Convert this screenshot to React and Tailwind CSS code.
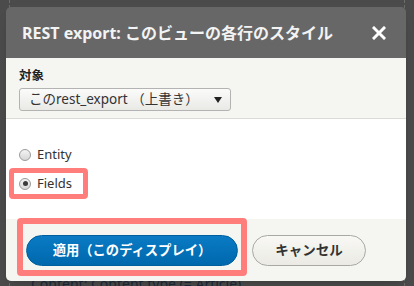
import React from "react";

const font = "font-['Noto_Sans','Noto_Sans_CJK_JP',sans-serif]";

const Radio = ({ checked }) => (
    <span className="flex h-[12px] w-[12px] items-center justify-center rounded-full border border-[#9a9a9a] bg-gradient-to-b from-[#f4f4f4] to-[#d6d6d6]">
        {checked && <span className="h-[5px] w-[5px] rounded-full bg-[#3a3a3a]" />}
    </span>
);

const App = () => {
    return (
        <div className={`h-[286px] w-[414px] overflow-hidden bg-[#4b4b4b] ${font}`}>
            <div className="mx-[9px] h-full border-x border-dashed border-[#6c6c6c] pt-[7px]">
                {/* Dialog */}
                <div className="relative z-10 -ml-[4px] w-[400px] overflow-hidden rounded-[5px] shadow-lg">
                    {/* Header */}
                    <div className="flex h-[51px] items-center justify-between bg-[#676767] pl-[16px] pr-[20px]">
                        <h1 className="text-[16px] font-bold text-[#f3f3f3]">REST export: このビューの各行のスタイル</h1>
                        <svg width="14" height="14" viewBox="0 0 14 14">
                            <path d="M2 2 L12 12 M12 2 L2 12" stroke="#ffffff" strokeWidth="3" strokeLinecap="square" />
                        </svg>
                    </div>

                    {/* Target */}
                    <div className="flex h-[61px] flex-col border-b border-[#dcdcd6] bg-[#f5f5f2] pl-[13px] pt-[8px]">
                        <label className="text-[12.5px] font-bold leading-[20px] text-[#222]">対象</label>
                        <div className="mt-[2px] flex h-[23px] w-[212px] items-center justify-between rounded-[3px] border border-[#b3b3b3] bg-gradient-to-b from-[#fbfbfa] to-[#e9e9e6] pl-[9px] pr-[8px]">
                            <span className="text-[13.5px] text-[#333]">このrest_export （上書き）</span>
                            <svg width="8" height="6" viewBox="0 0 8 6">
                                <path d="M0 0 H8 L4 6 Z" fill="#222" />
                            </svg>
                        </div>
                    </div>

                    {/* Style options */}
                    <div className="flex h-[100px] flex-col bg-white pl-[13px] pt-[23px]">
                        <div className="flex h-[26px] items-center gap-[6px]">
                            <Radio />
                            <span className="text-[13px] text-[#333]">Entity</span>
                        </div>
                        <div className="-ml-[10px] flex h-[31px] w-[79px] items-center gap-[6px] rounded-[4px] border-[5px] border-[#ff7d7b] pl-[5px]">
                            <Radio checked />
                            <span className="text-[13px] text-[#333]">Fields</span>
                        </div>
                    </div>

                    {/* Buttons */}
                    <div className="flex h-[62px] items-start gap-[5px] bg-[#f5f5f2] pl-[11px]">
                        <div className="-mt-[1px] rounded-[4px] border-[6px] border-[#ff7d7b] px-[3px] pb-[4px] pt-[11px]">
                            <button className="flex h-[31px] w-[212px] items-center justify-center rounded-full border border-[#005f9e] bg-gradient-to-b from-[#0a7bc4] to-[#0068ad] text-[13.3px] font-bold text-white">
                                適用（このディスプレイ）
                            </button>
                        </div>
                        <button className="mt-[16px] flex h-[31px] w-[114px] items-center justify-center rounded-full border border-[#a8a8a4] bg-gradient-to-b from-[#f8f8f5] to-[#ebeae4] text-[13.5px] font-bold text-[#333]">
                            キャンセル
                        </button>
                    </div>
                </div>

                {/* Underlying page text */}
                <p className="-mt-[6px] pl-[21px] text-[14px] leading-[18px] text-[#1d2a3a]">Content: Content type (= Article)</p>
            </div>
        </div>
    );
};

export default App;
